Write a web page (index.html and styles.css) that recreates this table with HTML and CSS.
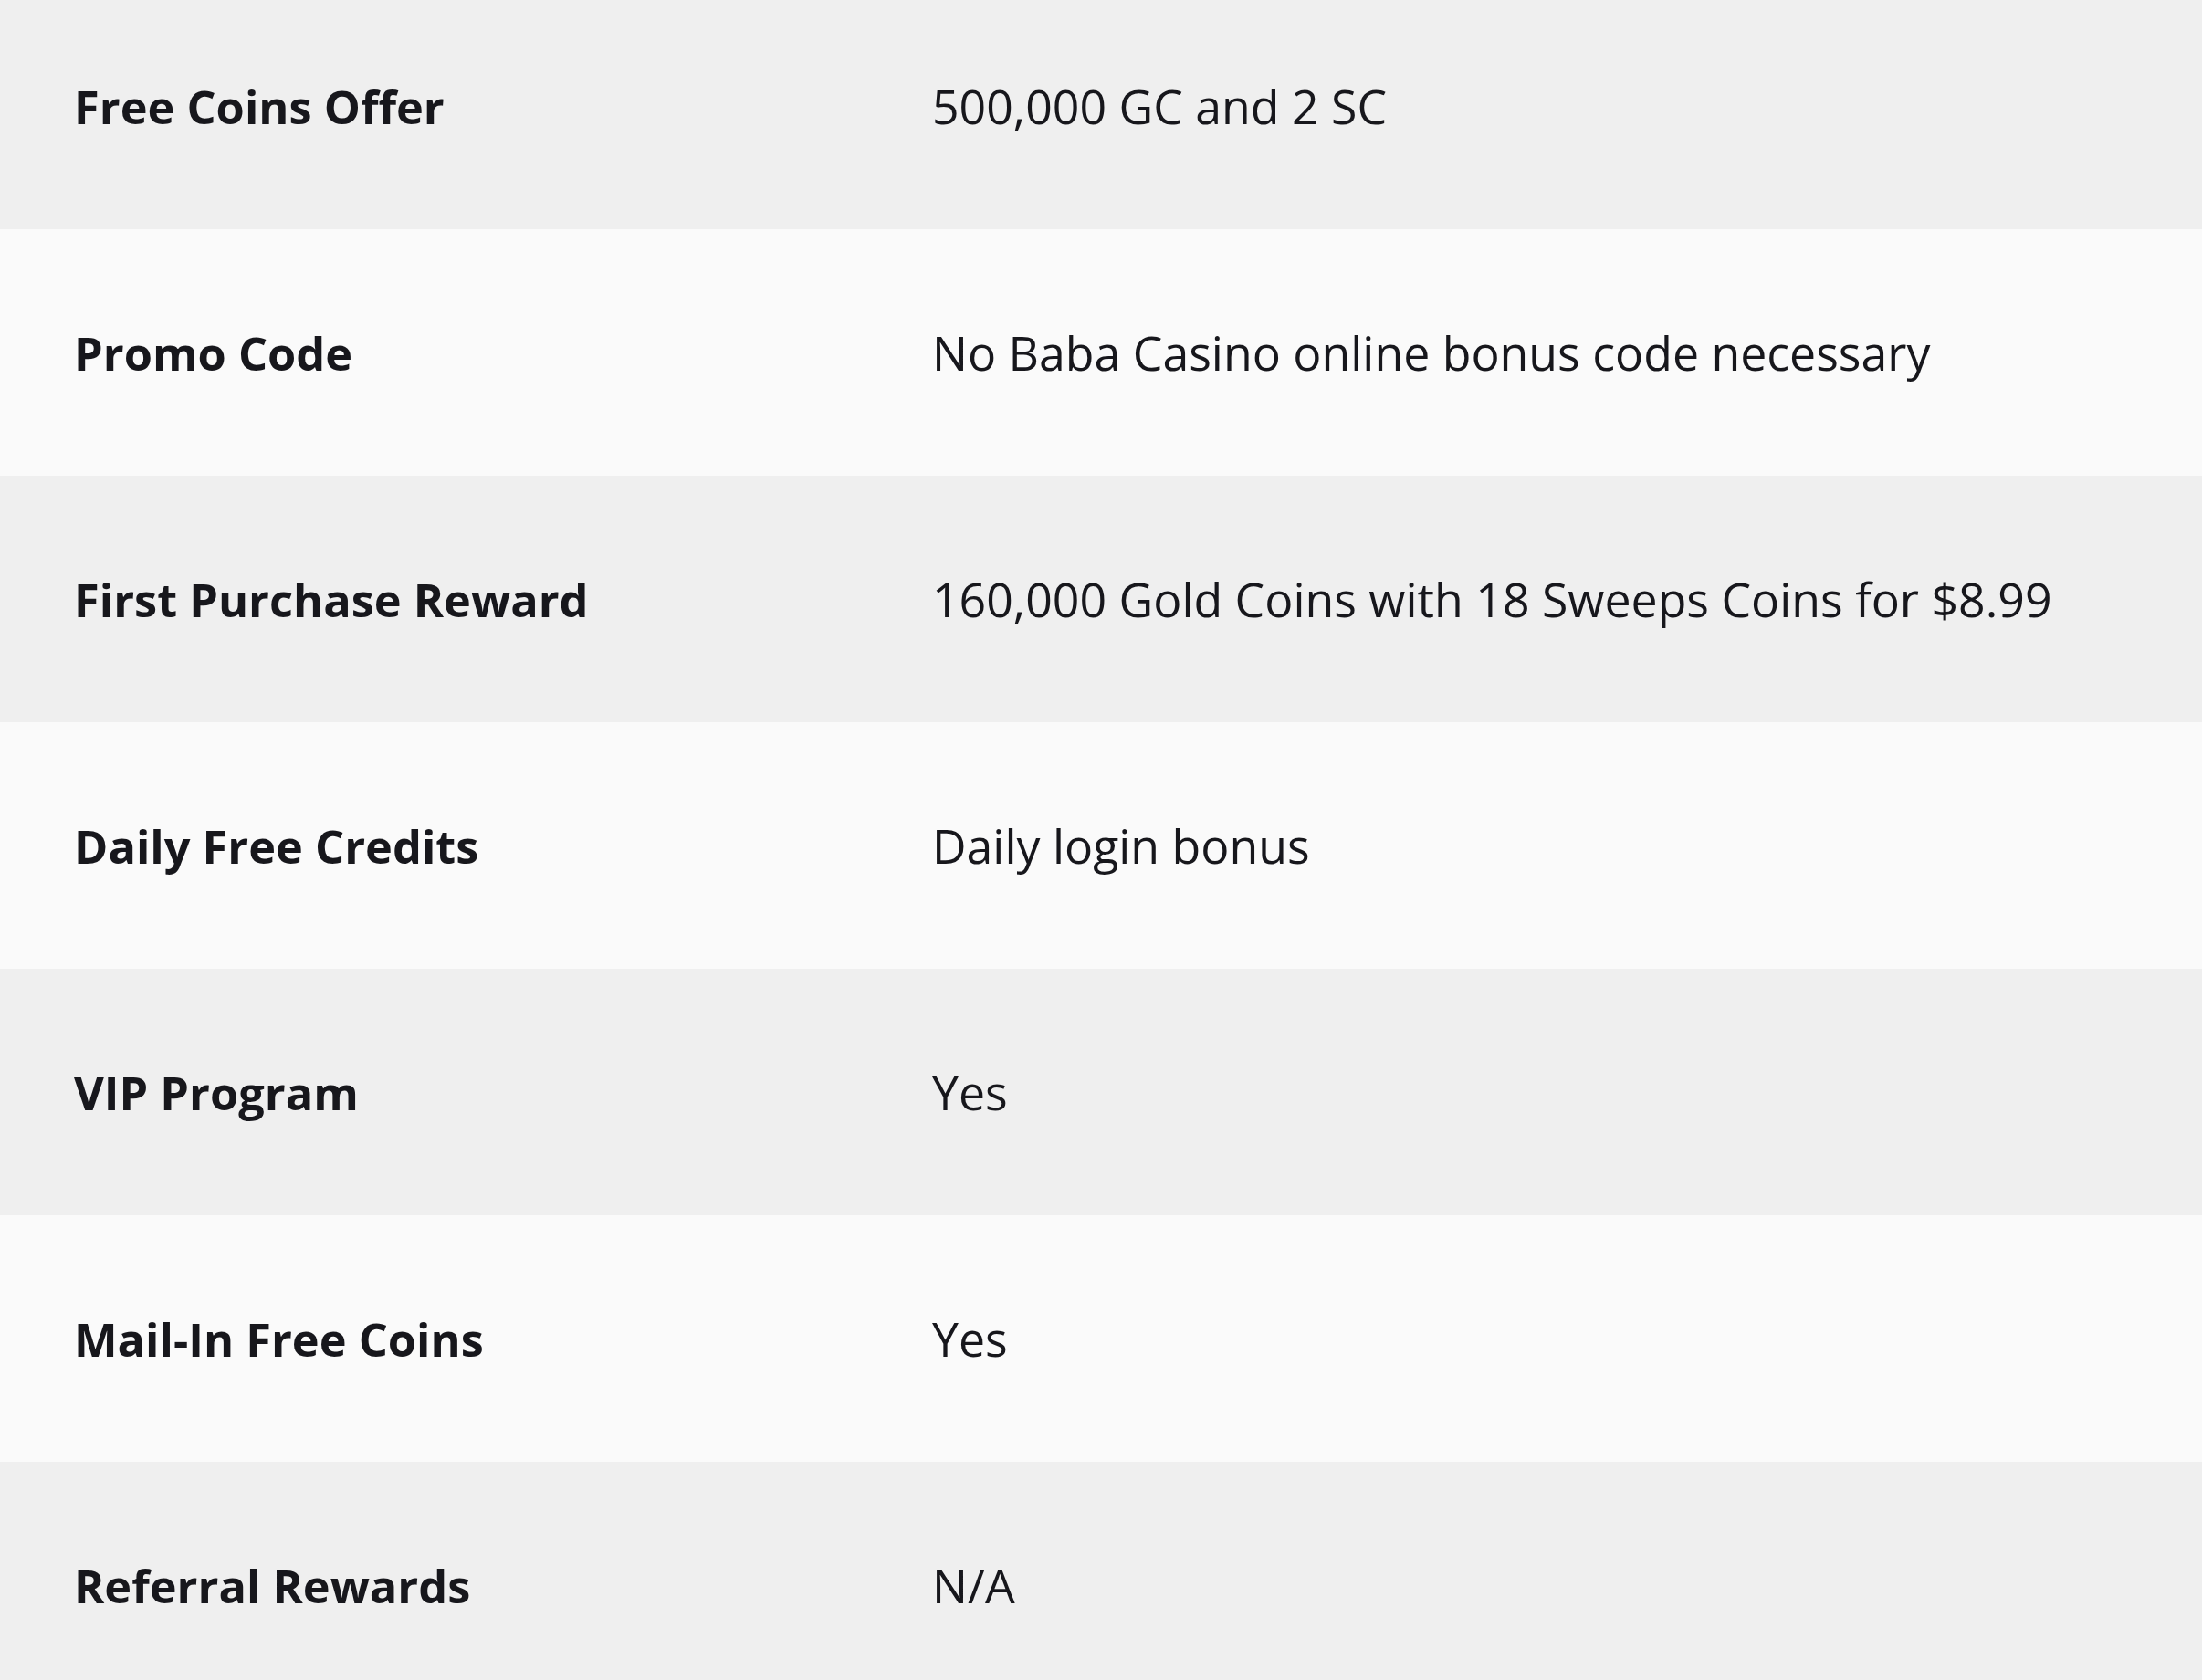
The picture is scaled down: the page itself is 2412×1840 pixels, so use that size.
FILE: index.html
```html
<!DOCTYPE html>
<html>
<head>
<meta charset="utf-8">
<link rel="stylesheet" href="styles.css">
</head>
<body>
<table class="info-table">
  <tbody>
    <tr class="row odd"><th class="label">Free Coins Offer</th><td class="value">500,000 GC and 2 SC</td></tr>
    <tr class="row even"><th class="label">Promo Code</th><td class="value">No Baba Casino online bonus code necessary</td></tr>
    <tr class="row odd"><th class="label">First Purchase Reward</th><td class="value">160,000 Gold Coins with 18 Sweeps Coins for $8.99</td></tr>
    <tr class="row even"><th class="label">Daily Free Credits</th><td class="value">Daily login bonus</td></tr>
    <tr class="row odd"><th class="label">VIP Program</th><td class="value">Yes</td></tr>
    <tr class="row even"><th class="label">Mail-In Free Coins</th><td class="value">Yes</td></tr>
    <tr class="row odd"><th class="label">Referral Rewards</th><td class="value">N/A</td></tr>
  </tbody>
</table>
</body>
</html>
```
FILE: styles.css
```css
html, body {
  margin: 0;
  padding: 0;
  background: #fafafa;
  overflow: hidden;
}
body {
  font-family: "Open Sans", "Noto Sans", sans-serif;
  color: #17171c;
}
.info-table {
  width: 100%;
  border-collapse: collapse;
  margin-top: -19px;
}
.row {
  height: 270px;
}
.row.odd { background: #efefef; }
.row.even { background: #fafafa; }
.label, .value {
  padding: 0;
  vertical-align: middle;
  text-align: left;
  white-space: nowrap;
}
.label {
  width: 940px;
  padding-left: 81px;
  font-size: 50.5px;
  font-weight: 700;
}
.value {
  font-size: 51.8px;
  font-weight: 400;
}
```
